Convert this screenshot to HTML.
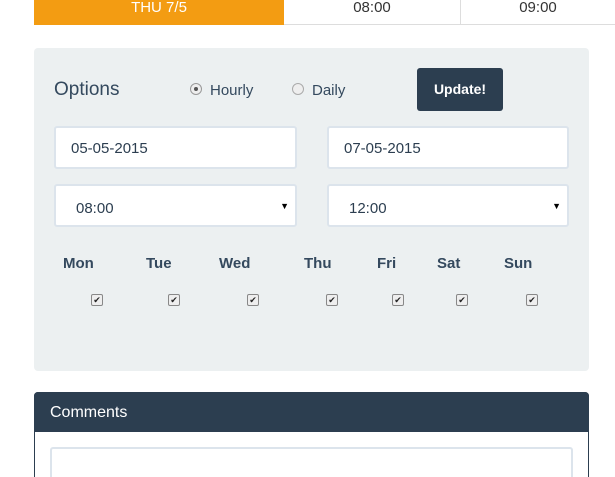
<!DOCTYPE html><html><head><style>
html,body{margin:0;width:615px;height:477px;overflow:hidden;background:#fff;font-family:"Liberation Sans",sans-serif;position:relative}
.a{position:absolute}
.inp{position:absolute;background:#fff;border:2px solid #dce4ec;border-radius:3px;box-sizing:border-box;font-size:15px;color:#2c3e50;padding-left:15px;line-height:42px}
.day{position:absolute;top:255px;font-size:15px;font-weight:bold;color:#34495e}
.cb{position:absolute;top:294px;width:10px;height:10px;border:1px solid #888;border-radius:2px;background:#eee;font-size:9px;line-height:10px;text-align:center;color:#222}
</style></head><body>
<div class="a" style="left:34px;top:0;width:250px;height:25px;background:#f39c12;color:#fff;text-align:center;font-size:15px;line-height:16px">THU 7/5</div>
<div class="a" style="left:284px;top:0;width:177px;height:25px;border-bottom:1px solid #ddd;border-right:1px solid #ddd;box-sizing:border-box;text-align:center;font-size:15px;line-height:16px;color:#333">08:00</div>
<div class="a" style="left:461px;top:0;width:154px;height:25px;border-bottom:1px solid #ddd;box-sizing:border-box;text-align:center;font-size:15px;line-height:16px;color:#333">09:00</div>
<div class="a" style="left:34px;top:48px;width:555px;height:323px;background:#ecf0f1;border-radius:4px"></div>
<div class="a" style="left:54px;top:79px;font-size:19px;color:#34495e">Options</div>
<div class="a" style="left:190px;top:83px;width:10px;height:10px;border:1px solid #999;border-radius:50%;background:#eee"><div style="margin:3px;width:4px;height:4px;border-radius:50%;background:#555"></div></div>
<div class="a" style="left:210px;top:82px;font-size:15px;color:#34495e">Hourly</div>
<div class="a" style="left:292px;top:83px;width:10px;height:10px;border:1px solid #aaa;border-radius:50%;background:#eee"></div>
<div class="a" style="left:312px;top:82px;font-size:15px;color:#34495e">Daily</div>
<div class="a" style="left:417px;top:68px;width:86px;height:43px;background:#2c3e50;border-radius:3px;color:#fff;font-size:14px;font-weight:bold;text-align:center;line-height:43px">Update!</div>
<div class="inp" style="left:54px;top:126px;width:243px;height:43px">05-05-2015</div>
<div class="inp" style="left:327px;top:126px;width:242px;height:43px">07-05-2015</div>
<div class="inp" style="left:54px;top:184px;width:243px;height:43px;padding-left:20px;line-height:45px">08:00<span style="position:absolute;right:6px;top:-2px;font-size:9px;color:#000">▼</span></div>
<div class="inp" style="left:327px;top:184px;width:242px;height:43px;padding-left:20px;line-height:45px">12:00<span style="position:absolute;right:6px;top:-2px;font-size:9px;color:#000">▼</span></div>
<div class="day" style="left:63px">Mon</div><div class="day" style="left:146px">Tue</div><div class="day" style="left:219px">Wed</div><div class="day" style="left:304px">Thu</div><div class="day" style="left:377px">Fri</div><div class="day" style="left:437px">Sat</div><div class="day" style="left:504px">Sun</div>
<div class="cb" style="left:91px">✔</div><div class="cb" style="left:168px">✔</div><div class="cb" style="left:247px">✔</div><div class="cb" style="left:326px">✔</div><div class="cb" style="left:392px">✔</div><div class="cb" style="left:456px">✔</div><div class="cb" style="left:526px">✔</div>
<div class="a" style="left:34px;top:392px;width:555px;height:100px;border:1px solid #2c3e50;border-radius:4px;box-sizing:border-box"></div>
<div class="a" style="left:34px;top:392px;width:555px;height:40px;background:#2c3e50;border-radius:4px 4px 0 0;color:#fff;font-size:16px;line-height:41px;padding-left:16px;box-sizing:border-box">Comments</div>
<div class="a" style="left:50px;top:447px;width:523px;height:40px;border:2px solid #dce4ec;border-radius:3px;box-sizing:border-box"></div>
</body></html>
